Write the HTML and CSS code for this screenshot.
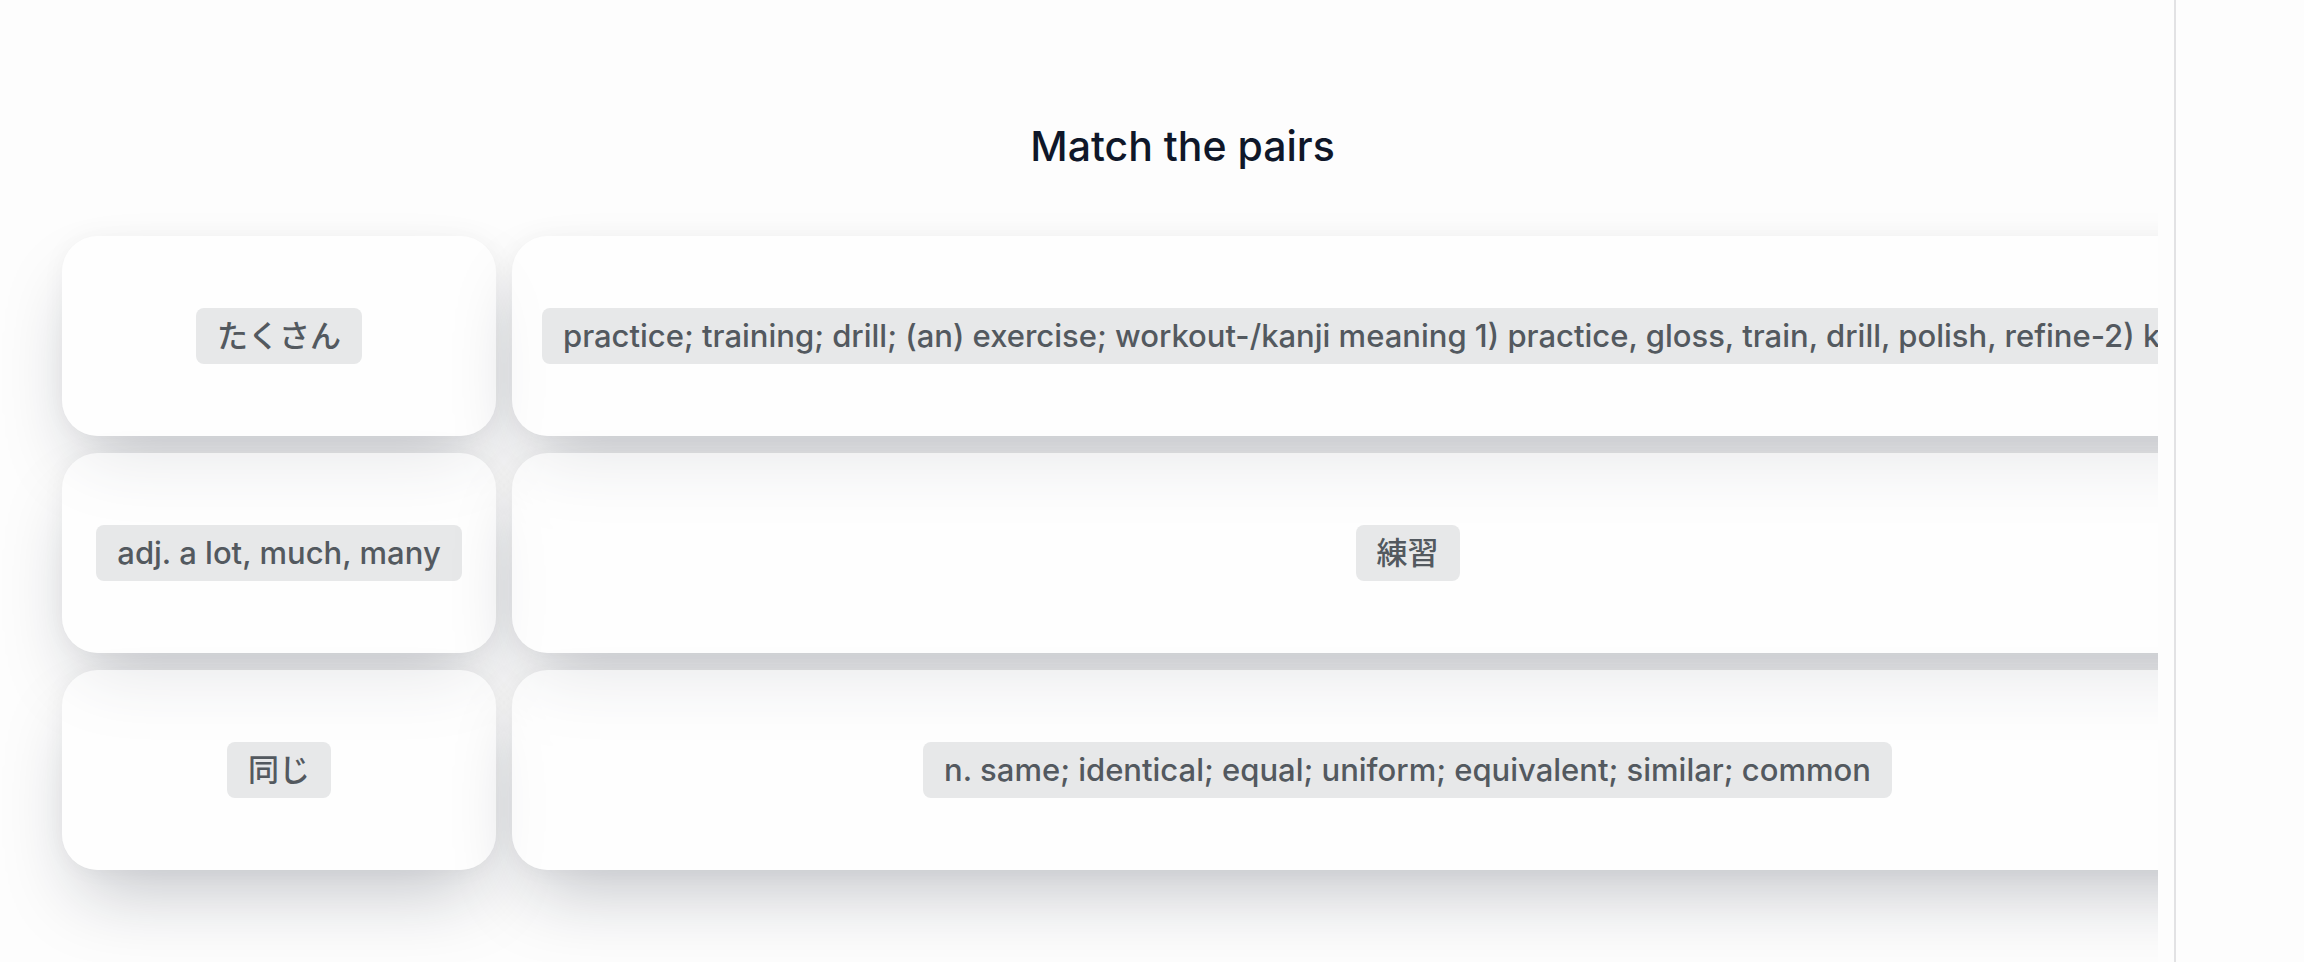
FILE: index.html
```html
<!DOCTYPE html>
<html lang="en">
  <head>
    <meta charset="utf-8" />
    <meta name="viewport" content="width=device-width, initial-scale=1.0" />
    <title>Match the pairs</title>
    <link rel="stylesheet" href="styles.css">
  </head>

  <body>
    <div class="app">
      <main class="stage">
        <div class="board">
          <h1 class="title">Match the pairs</h1>
          <div class="pairs">
            <div class="card"><span class="chip" lang="ja">たくさん</span></div>
            <div class="card">
              <span class="chip">practice; training; drill; (an) exercise; workout-/kanji meaning 1) practice, gloss, train, drill, polish, refine-2) knead, wring</span>
            </div>
            <div class="card"><span class="chip">adj. a lot, much, many</span></div>
            <div class="card"><span class="chip" lang="ja">練習</span></div>
            <div class="card"><span class="chip" lang="ja">同じ</span></div>
            <div class="card">
              <span class="chip">n. same; identical; equal; uniform; equivalent; similar; common</span>
            </div>
          </div>
        </div>
      </main>
      <aside class="side"></aside>
    </div>
  </body>
</html>
```
FILE: styles.css
```css
body {
  margin: 0;
  background: #fdfdfd;
  font-family: Inter, "Noto Sans CJK JP", sans-serif;
}

.app {
  display: flex;
  height: 100vh;
}

.stage {
  flex: none;
  width: 2158px;
  overflow: hidden;
}

.side {
  flex: 1;
  margin-left: 16px;
  border-left: 2px solid hsl(220deg 5% 89%);
}

.board {
  width: 2241px;
  margin-left: 62px;
  padding-top: 123px;
}

.title {
  margin: 0 0 67px;
  font-size: 41px;
  line-height: 46px;
  font-weight: 500;
  text-align: center;
  color: hsl(222deg 47% 11%);
}

.pairs {
  display: grid;
  grid-template-columns: 434px 1791px;
  gap: 17px 16px;
}

.card {
  box-sizing: border-box;
  height: 200px;
  padding: 0 30px;
  display: flex;
  align-items: center;
  justify-content: safe center;
  border-radius: 36px;
  background: rgba(255, 255, 255, 0.58);
  box-shadow: 0 37px 75px -18px rgba(15, 23, 42, 0.25),
    0 0 24px rgba(15, 23, 42, 0.04);
}

.chip {
  padding: 6px 21px;
  border-radius: 8px;
  background: hsl(220deg 5% 91%);
  color: hsl(212deg 7% 35%);
  font-size: 31px;
  line-height: 44px;
  font-weight: 500;
  white-space: nowrap;
}
```
